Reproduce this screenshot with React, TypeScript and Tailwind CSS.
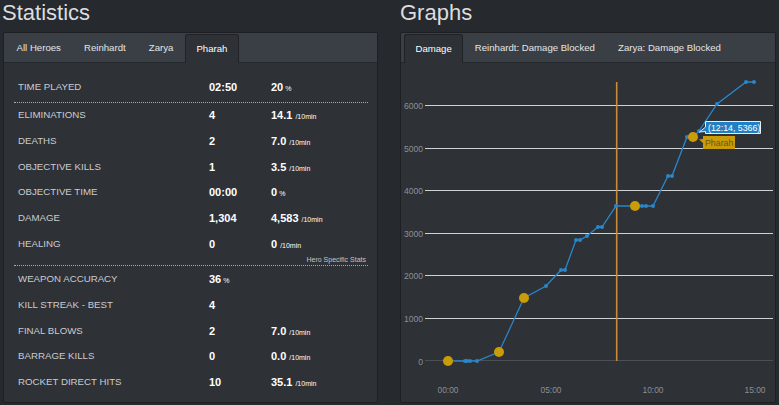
import React from "react";

const font = "font-['Liberation_Sans',Arial,sans-serif]";

type Row = { label: string; value: string; rate?: string; unit?: string };

const mainRows: Row[] = [
  { label: "ELIMINATIONS", value: "4", rate: "14.1", unit: "/10min" },
  { label: "DEATHS", value: "2", rate: "7.0", unit: "/10min" },
  { label: "OBJECTIVE KILLS", value: "1", rate: "3.5", unit: "/10min" },
  { label: "OBJECTIVE TIME", value: "00:00", rate: "0", unit: "%" },
  { label: "DAMAGE", value: "1,304", rate: "4,583", unit: "/10min" },
  { label: "HEALING", value: "0", rate: "0", unit: "/10min" },
];

const heroRows: Row[] = [
  { label: "WEAPON ACCURACY", value: "36", unit: "%" },
  { label: "KILL STREAK - BEST", value: "4" },
  { label: "FINAL BLOWS", value: "2", rate: "7.0", unit: "/10min" },
  { label: "BARRAGE KILLS", value: "0", rate: "0.0", unit: "/10min" },
  { label: "ROCKET DIRECT HITS", value: "10", rate: "35.1", unit: "/10min" },
];

function Unit({ u }: { u?: string }) {
  if (!u) return null;
  return u === "%" ? (
    <span className="ml-[2px] text-[7px] font-normal">%</span>
  ) : (
    <span className="ml-[3px] text-[7px] font-normal">{u}</span>
  );
}

function StatRow({ row }: { row: Row }) {
  const valueHasUnit = !row.rate && row.unit;
  return (
    <div className="flex h-[25.7px] items-center pl-[4px]">
      <div className="w-[191px] text-[9.7px] text-[#cbcccf]">{row.label}</div>
      <div className="w-[62px] text-[11px] font-bold text-white">
        {row.value}
        {valueHasUnit && <Unit u={row.unit} />}
      </div>
      {row.rate && (
        <div className="text-[11px] font-bold text-white">
          {row.rate}
          <Unit u={row.unit} />
        </div>
      )}
    </div>
  );
}

function Tabs({ tabs, active, ml }: { tabs: string[]; active: string; ml: string }) {
  return (
    <div className="flex h-[30px] shrink-0 items-end border-b border-[#24272b] bg-[#3a3e45]">
      <div className={`flex ${ml}`}>
        {tabs.map((t) =>
          t === active ? (
            <div
              key={t}
              className="-mb-px flex h-[29px] items-center rounded-t-[3px] border border-b-0 border-[#1f2226] bg-[#2e3136] px-[10.5px] text-[9.6px] text-white"
            >
              {t}
            </div>
          ) : (
            <div key={t} className="flex h-[28px] items-center px-[11.6px] text-[9.6px] text-[#e4e5e6]">
              {t}
            </div>
          )
        )}
      </div>
    </div>
  );
}

const dotted = "border-t border-dotted border-[#a9abad]";

function StatsPanel() {
  return (
    <div className="flex h-[371px] w-[375px] flex-col rounded-[2px] border border-[#1d1f23] bg-[#2e3136]">
      <Tabs tabs={["All Heroes", "Reinhardt", "Zarya", "Pharah"]} active="Pharah" ml="ml-[1px]" />
      <div className="ml-[10px] mr-[9px] pt-[11px]">
        <StatRow row={{ label: "TIME PLAYED", value: "02:50", rate: "20", unit: "%" }} />
        <div className={`mt-[2px] ${dotted}`} />
        {mainRows.map((r) => (
          <StatRow key={r.label} row={r} />
        ))}
        <div className="-mt-[1px] flex h-[8px] items-center justify-end pr-[2px] text-[7px] text-[#c4c6c8]">
          Hero Specific Stats
        </div>
        <div className={`mt-[1px] ${dotted}`} />
        <div className="pt-[1px]">
          {heroRows.map((r) => (
            <StatRow key={r.label} row={r} />
          ))}
        </div>
      </div>
    </div>
  );
}

const yOf = (v: number) => 360.5 - v * 0.04251;

const pts: [number, number][] = [
  [448, 361], [465, 361], [467, 361], [470, 361], [477, 361],
  [499, 352], [524, 298], [546, 286], [561, 270], [565, 270],
  [576, 240], [580, 240], [587, 236], [598, 227], [602, 227],
  [616, 206], [635, 206], [642, 206], [646, 206], [653, 206],
  [668, 176], [672, 176], [687, 137], [693, 137], [699, 131],
  [717, 104], [746, 82], [754, 82],
];

const bigDots: [number, number][] = [
  [448, 361], [499, 352], [524, 298], [635, 206], [693, 137],
];

function Chart() {
  return (
    <svg width="374" height="339" viewBox="401 63 374 339" className="block">
      {[1000, 2000, 3000, 4000, 5000, 6000].map((v) => (
        <line key={v} x1="425" x2="773" y1={Math.round(yOf(v)) + 0.5} y2={Math.round(yOf(v)) + 0.5} stroke="#cfd1d3" strokeWidth="1" />
      ))}
      <line x1="425" x2="773" y1="360.5" y2="360.5" stroke="#4b4f55" strokeWidth="1" />
      {[0, 1000, 2000, 3000, 4000, 5000, 6000].map((v) => (
        <text key={v} x="423" y={Math.round(yOf(v)) + 3.5} textAnchor="end" fontSize="8.6" fill="#8d9094" fontFamily="Liberation Sans, Arial, sans-serif">
          {v}
        </text>
      ))}
      {[
        ["00:00", 448],
        ["05:00", 551],
        ["10:00", 653],
        ["15:00", 755],
      ].map(([t, x]) => (
        <text key={t} x={x} y="393" textAnchor="middle" fontSize="8.4" fill="#8d9094" fontFamily="Liberation Sans, Arial, sans-serif">
          {t}
        </text>
      ))}
      <line x1="616.7" x2="616.7" y1="82" y2="361" stroke="#c88a3b" strokeWidth="1.6" />
      <polyline points={pts.map((p) => p.join(",")).join(" ")} fill="none" stroke="#2a86c8" strokeWidth="1.3" />
      {pts.map(([x, y], i) => (
        <circle key={i} cx={x} cy={y} r="2" fill="#2a86c8" />
      ))}
      {bigDots.map(([x, y], i) => (
        <circle key={i} cx={x} cy={y} r="5" fill="#c99c08" />
      ))}
      {/* tooltip */}
      <path d="M705.5 121.5 H760.5 V133.5 H705.5 V131.5 L699.5 132 L705.5 127 Z" fill="#2180c4" stroke="#e8eef3" strokeWidth="1" />
      <text x="708" y="130.8" fontSize="8.8" fill="#ffffff" fontFamily="Liberation Sans, Arial, sans-serif">
        (12:14, 5366)
      </text>
      <path d="M703 136 H735 V149 H703 V143 L699 139.5 L703 139 Z" fill="#c99c08" />
      <text x="705" y="145.8" fontSize="8.8" fill="#6a5516" fontFamily="Liberation Sans, Arial, sans-serif">
        Pharah
      </text>
    </svg>
  );
}

function GraphsPanel() {
  return (
    <div className="flex h-[371px] w-[376px] flex-col rounded-[2px] border border-[#1d1f23] bg-[#2e3136]">
      <Tabs tabs={["Damage", "Reinhardt: Damage Blocked", "Zarya: Damage Blocked"]} active="Damage" ml="ml-[3px]" />
      <Chart />
    </div>
  );
}

export default function App() {
  return (
    <div className={`flex h-[405px] w-[779px] overflow-hidden bg-[#26292d] ${font}`}>
      <div className="flex w-[389px] flex-col pl-[3px]">
        <h1 className="h-[32px] -ml-[1px] text-[22px] leading-[26px] text-[#dcdddf]">Statistics</h1>
        <StatsPanel />
      </div>
      <div className="flex flex-col pl-[11px]">
        <h1 className="h-[32px] text-[22px] leading-[26px] text-[#dcdddf]">Graphs</h1>
        <GraphsPanel />
      </div>
    </div>
  );
}
